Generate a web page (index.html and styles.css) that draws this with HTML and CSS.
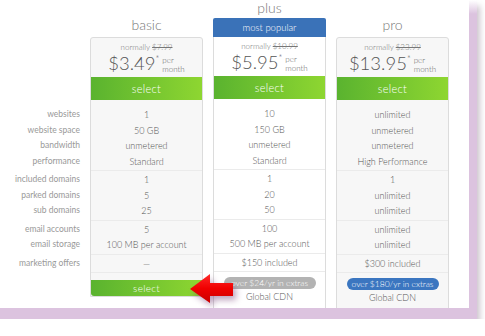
FILE: index.html
```html
<!DOCTYPE html>
<html>
<head>
<meta charset="utf-8">
<link rel="stylesheet" href="styles.css">
</head>
<body>
<div class="shell">
  <div class="frame">
    <div class="table">
      <div class="labels">
        <div class="group first">
          <div class="row">websites</div>
          <div class="row">website space</div>
          <div class="row">bandwidth</div>
          <div class="row">performance</div>
        </div>
        <div class="group">
          <div class="row">included domains</div>
          <div class="row">parked domains</div>
          <div class="row">sub domains</div>
        </div>
        <div class="group">
          <div class="row">email accounts</div>
          <div class="row">email storage</div>
        </div>
        <div class="group">
          <div class="row">marketing offers</div>
        </div>
      </div>

      <div class="col">
        <div class="title">basic</div>
        <div class="card">
          <div class="price-block">
            <div class="normally">normally <s>$7.99</s></div>
            <div class="price"><span class="amt">$3.49</span><span class="star">*</span><span class="per">per<br>month</span></div>
          </div>
          <div class="btn">select</div>
          <div class="group first">
            <div class="row">1</div>
            <div class="row">50 GB</div>
            <div class="row">unmetered</div>
            <div class="row">Standard</div>
          </div>
          <div class="group">
            <div class="row">1</div>
            <div class="row">5</div>
            <div class="row">25</div>
          </div>
          <div class="group">
            <div class="row">5</div>
            <div class="row">100 MB per account</div>
          </div>
          <div class="group">
            <div class="row">—</div>
          </div>
          <div class="btn bottom">select</div>
        </div>
      </div>

      <div class="col">
        <div class="title short">plus</div>
        <div class="badge">most popular</div>
        <div class="card white">
          <div class="price-block">
            <div class="normally">normally <s>$10.99</s></div>
            <div class="price"><span class="amt">$5.95</span><span class="star">*</span><span class="per">per<br>month</span></div>
          </div>
          <div class="btn">select</div>
          <div class="group first">
            <div class="row">10</div>
            <div class="row">150 GB</div>
            <div class="row">unmetered</div>
            <div class="row">Standard</div>
          </div>
          <div class="group">
            <div class="row">1</div>
            <div class="row">20</div>
            <div class="row">50</div>
          </div>
          <div class="group">
            <div class="row">100</div>
            <div class="row">500 MB per account</div>
          </div>
          <div class="group">
            <div class="row">$150 included</div>
          </div>
          <div class="extras">
            <span class="pill gray">over $24/yr in extras</span>
            <div class="row">Global CDN</div>
            <div class="row">&nbsp;</div>
          </div>
        </div>
      </div>

      <div class="col">
        <div class="title">pro</div>
        <div class="card">
          <div class="price-block">
            <div class="normally">normally <s>$23.99</s></div>
            <div class="price"><span class="amt">$13.95</span><span class="star">*</span><span class="per">per<br>month</span></div>
          </div>
          <div class="btn">select</div>
          <div class="group first">
            <div class="row">unlimited</div>
            <div class="row">unmetered</div>
            <div class="row">unmetered</div>
            <div class="row">High Performance</div>
          </div>
          <div class="group">
            <div class="row">1</div>
            <div class="row">unlimited</div>
            <div class="row">unlimited</div>
          </div>
          <div class="group">
            <div class="row">unlimited</div>
            <div class="row">unlimited</div>
          </div>
          <div class="group">
            <div class="row">$300 included</div>
          </div>
          <div class="extras">
            <span class="pill blue">over $180/yr in extras</span>
            <div class="row">Global CDN</div>
            <div class="row">&nbsp;</div>
          </div>
        </div>
      </div>
    </div>

    <svg class="arrow" width="56" height="42" viewBox="0 0 56 42">
      <defs>
        <linearGradient id="rg" x1="0" y1="0" x2="0" y2="1">
          <stop offset="0" stop-color="#ff2a2a"/>
          <stop offset="0.5" stop-color="#f00000"/>
          <stop offset="1" stop-color="#c80000"/>
        </linearGradient>
      </defs>
      <polygon points="4,19 24,4 24,13 47,13 47,26 24,26 24,33" fill="url(#rg)"/>
    </svg>
  </div>
</div>
</body>
</html>
```

FILE: styles.css
```css
body {
  margin: 0;
  background: #fff;
  font-family: Lato, "Open Sans", "Liberation Sans", sans-serif;
  font-weight: 300;
}

.shell {
  width: 477px;
  height: 319px;
  background: linear-gradient(to bottom, #fff 0, #dcc3df 14px);
  box-shadow: 3px 6px 6px rgba(90, 60, 90, 0.3);
}

.frame {
  position: relative;
  width: 469px;
  height: 308px;
  overflow: hidden;
  background: #fff;
}

.table {
  display: flex;
  gap: 10px;
}

.labels {
  width: 80px;
  padding-top: 100px;
  text-align: right;
  color: #999;
  font-size: 8.5px;
  font-weight: 400;
}

.labels .group {
  border-bottom-color: transparent;
}

.col {
  width: 113px;
  display: flex;
  flex-direction: column;
}

.title {
  height: 37px;
  box-sizing: border-box;
  display: flex;
  align-items: flex-end;
  justify-content: center;
  padding-bottom: 4px;
  font-size: 14px;
  color: #777;
  line-height: 16px;
}

.title.short {
  height: 18px;
  padding-bottom: 2px;
}

.badge {
  height: 19px;
  background: #3a72b8;
  color: #fff;
  font-size: 9.5px;
  display: flex;
  align-items: center;
  justify-content: center;
  border-radius: 2px 2px 0 0;
}

.card {
  border: 1px solid #dcdcdc;
  border-radius: 3px 3px 0 0;
  background: #f7f7f7;
  text-align: center;
  color: #555;
  font-size: 9px;
}

.card.white {
  background: #fff;
  border-top: none;
  border-radius: 0;
}

.price-block {
  height: 39px;
  box-sizing: border-box;
  padding-top: 4px;
}

.normally {
  font-size: 8px;
  line-height: 10px;
  color: #777;
}

.price {
  display: flex;
  justify-content: center;
  align-items: flex-start;
}

.amt {
  font-size: 18.5px;
  line-height: 22px;
  color: #555;
}

.star {
  font-size: 9px;
  line-height: 10px;
  padding-top: 2px;
}

.per {
  font-size: 8px;
  line-height: 8.5px;
  text-align: left;
  margin-left: 3px;
  padding-top: 4px;
  color: #666;
}

.btn {
  height: 23px;
  line-height: 23px;
  background: linear-gradient(90deg, #5ab32f, #8ed631);
  color: #fff;
  font-size: 11px;
  letter-spacing: 0.3px;
}

.btn.bottom {
  height: 16px;
  line-height: 16px;
  margin-top: 7px;
  font-size: 10px;
  border-radius: 0 0 3px 3px;
}

.group {
  padding: 1px 0;
  border-bottom: 1px solid #ebebeb;
}

.group.first {
  padding-top: 7px;
}

.row {
  height: 15.5px;
  line-height: 15.5px;
  white-space: nowrap;
}

.extras {
  padding-top: 5px;
}

.pill {
  display: inline-block;
  width: 92px;
  height: 12px;
  line-height: 12px;
  border-radius: 6px;
  color: #fff;
  font-size: 8.5px;
  white-space: nowrap;
}

.pill.gray {
  background: #b3b3b3;
}

.pill.blue {
  background: #3b76c0;
}

.extras .row {
  height: 15px;
  line-height: 15px;
}

.arrow {
  position: absolute;
  left: 186px;
  top: 270px;
  filter: drop-shadow(3px 4px 3px rgba(110, 50, 110, 0.45));
}
```
